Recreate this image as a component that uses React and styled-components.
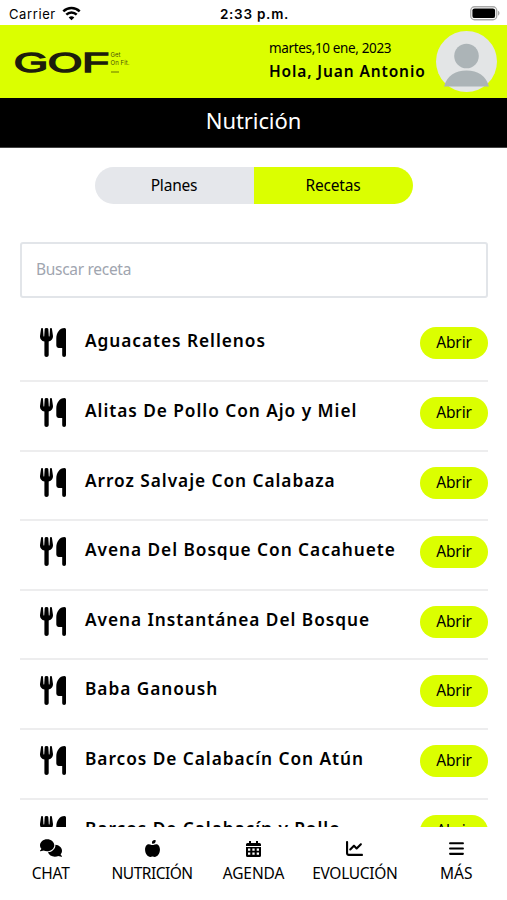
import React from 'react';
import styled, { createGlobalStyle } from 'styled-components';
import {
    FaComments,
    FaAppleWhole,
    FaChartLine,
    FaBars,
} from 'react-icons/fa6';

const GlobalStyles = createGlobalStyle`
    * {
        box-sizing: border-box;
    }

    body {
        margin: 0;
        background: white;
        color: black;
        font-family: 'Noto Sans', 'Open Sans', sans-serif;
    }
`

const Screen = styled.div`
    display: flex;
    flex-direction: column;
    width: 507px;
    height: 900px;
    overflow: hidden;
`

const StatusBar = styled.div`
    flex: none;
    display: grid;
    grid-template-columns: 1fr auto 1fr;
    align-items: center;
    height: 25px;
    padding: 2px 7px 0 9px;
    font-family: 'Inter', sans-serif;
    font-size: 13px;
    line-height: 20px;
`

const Carrier = styled.div`
    display: flex;
    align-items: center;
    gap: 6px;
    letter-spacing: 0.6px;
`

const Clock = styled.div`
    font-size: 13.5px;
    font-weight: 600;
    letter-spacing: 0.75px;
`

const BatterySlot = styled.div`
    display: flex;
    justify-content: flex-end;
`

const Header = styled.header`
    flex: none;
    display: flex;
    align-items: center;
    height: 73px;
    padding: 0 10px 0 14px;
    background: #dbff00;
`

const Greeting = styled.div`
    flex: none;
    width: 167px;
    margin: -4px 0 0 auto;
    white-space: nowrap;
`

const Today = styled.div`
    font-size: 13.5px;
    line-height: 20px;
    letter-spacing: -0.35px;
`

const Hello = styled.div`
    margin-top: 2px;
    font-size: 15.5px;
    font-weight: 600;
    line-height: 22px;
    letter-spacing: 0.88px;
`

const Title = styled.h1`
    flex: none;
    height: 50px;
    margin: 0;
    background: black;
    border-bottom: 1px solid #444;
    color: white;
    font-size: 22px;
    font-weight: 400;
    line-height: 45px;
    letter-spacing: -0.1px;
    text-align: center;
`

const Tabs = styled.div`
    flex: none;
    display: flex;
    width: 318px;
    height: 37px;
    margin: 19px auto 0;
    border-radius: 19px;
    overflow: hidden;
`

const Tab = styled.button`
    flex: 1;
    padding: 0 0 1px;
    border: 0;
    background: ${(props) => (props.$active ? '#dbff00' : '#e5e7eb')};
    color: black;
    font-family: inherit;
    font-size: 15.5px;
    letter-spacing: -0.2px;
`

const Search = styled.input`
    flex: none;
    height: 56px;
    margin: 38px 19px 0 20px;
    padding: 0 14px 2px;
    border: 2px solid #e2e5e9;
    border-radius: 3px;
    font-family: inherit;
    font-size: 15.5px;
    letter-spacing: -0.3px;
    outline: none;

    &::placeholder {
        color: #a0a5af;
        opacity: 1;
    }
`

const List = styled.div`
    flex: 1;
    min-height: 0;
    margin: 14.4px 19px 0 20px;
    overflow: hidden;
`

const Row = styled.div`
    display: flex;
    align-items: flex-start;
    height: 69.6px;
    padding: 15px 0 0 20px;
    border-bottom: 2px solid #ededee;
`

const Name = styled.div`
    flex: 1;
    margin-left: 18px;
    font-size: 17.3px;
    font-weight: 600;
    line-height: 27px;
    letter-spacing: 0.95px;
    white-space: nowrap;
`

const Open = styled.button`
    flex: none;
    width: 68px;
    height: 32px;
    padding: 0 0 2px;
    border: 0;
    border-radius: 16px;
    background: #dbff00;
    color: black;
    font-family: inherit;
    font-size: 15.5px;
    letter-spacing: -0.1px;
`

const Nav = styled.nav`
    flex: none;
    display: grid;
    grid-template-columns: repeat(5, 1fr);
    height: 73px;
    background: white;
`

const NavItem = styled.div`
    display: flex;
    flex-direction: column;
    align-items: center;
    padding-top: 12px;
    font-size: 15.5px;
    line-height: 22px;
    letter-spacing: ${(props) => props.$spacing}px;
    white-space: nowrap;
`

const NavIcon = styled.div`
    display: flex;
    height: 18px;
    margin-bottom: 5px;
    font-size: ${(props) => props.$size}px;
    align-items: center;
`

const Wifi = () => (
    <svg width="19" height="15" viewBox="0 0 19 15" fill="none" stroke="black" strokeWidth="2.5">
        <path d="M1.3 5.4C6 0.9 13 0.9 17.7 5.4" />
        <path d="M4.3 8.7C7.3 5.8 11.7 5.8 14.7 8.7" />
        <path d="M9.5 14.2L6.7 11.4C8.3 9.9 10.7 9.9 12.3 11.4Z" fill="black" stroke="none" />
    </svg>
)

const Battery = () => (
    <svg width="30" height="15" viewBox="0 0 30 15">
        <rect x="0.75" y="0.75" width="26" height="13" rx="3.8" fill="white" stroke="#a9a9a9" strokeWidth="1.3" />
        <rect x="2.4" y="2.4" width="22.7" height="9.7" rx="2.2" fill="black" />
        <path d="M28 4.8C30 5.6 30 8.8 28 9.6Z" fill="#a9a9a9" />
    </svg>
)

const Utensils = () => (
    <svg width="27" height="31" viewBox="0 0 27 31">
        <path d="M1.1 1.6Q1.3 0.9 2.2 1Q3 1.100 3 1.900L3.500 9.300Q3.900 9.900 4.200 9.300L4.700 1.900Q4.800 1 6.500 1Q8.200 1 8.300 1.900L8.800 9.300Q9.100 9.900 9.500 9.300L10 1.900Q10 1.100 10.800 1Q11.700 0.900 11.900 1.600L13 9Q13.200 13.200 8.700 14.600V28.300Q8.600 30 6.500 30T4.400 28.300V14.600Q-0.200 13.200 0 9Z" />
        <path d="M24.600 1Q26 1 26 2.500V28.200Q26 30 24.100 30T22.200 28.200V21H18.600Q16.300 20.800 16.300 18.500V11.500C16.300 6 19.500 1 24.600 1Z" />
    </svg>
)

const Calendar = () => (
    <svg width="15" height="17" viewBox="0 0 15 17">
        <path d="M3 1h2v2h5V1h2v2h1.5A1.5 1.5 0 0 1 15 4.500V6H0V4.500A1.500 1.500 0 0 1 1.500 3H3Z" />
        <path
            fillRule="evenodd"
            d="M0 7h15v8.500a1.500 1.500 0 0 1-1.500 1.500h-12A1.500 1.500 0 0 1 0 15.500ZM2 8.500v2.200h2.300V8.500ZM6.350 8.500v2.200h2.300V8.500ZM10.700 8.500v2.200h2.300V8.500ZM2 12.600v2.200h2.300v-2.200ZM6.350 12.600v2.200h2.300v-2.200ZM10.700 12.600v2.200h2.300v-2.200Z"
        />
    </svg>
)

const Logo = () => (
    <svg width="118" height="30" viewBox="0 0 118 30" fill="#1d1d0c">
        <text
            x="0"
            y="24.800"
            fontFamily="Liberation Sans"
            fontSize="27"
            stroke="#1d1d0c"
            strokeWidth="1.4"
            textLength="95"
            lengthAdjust="spacingAndGlyphs"
        >
            GOF
        </text>
        <g fontFamily="Inter" fontSize="6" fill="#4b5208">
            <text x="96.5" y="10">Get</text>
            <text x="96.5" y="18" textLength="19">On Fit.</text>
        </g>
        <rect x="97" y="24.5" width="8" height="1" fill="#6b7505" />
    </svg>
)

const Avatar = () => (
    <svg width="61" height="61" viewBox="0 0 61 61">
        <circle cx="30.5" cy="30.5" r="30.5" fill="#e3e5e6" />
        <circle cx="30.5" cy="25" r="12.3" fill="#acb4b7" />
        <path d="M8 55.5C11 45 19 39.5 30.5 39.5S50 45 53 55.5Z" fill="#acb4b7" />
    </svg>
)

const recipes = [
    'Aguacates Rellenos',
    'Alitas De Pollo Con Ajo y Miel',
    'Arroz Salvaje Con Calabaza',
    'Avena Del Bosque Con Cacahuete',
    'Avena Instantánea Del Bosque',
    'Baba Ganoush',
    'Barcos De Calabacín Con Atún',
    'Barcos De Calabacín y Pollo',
];

const sections = [
    { label: 'CHAT', icon: FaComments, size: 22, spacing: -0.2 },
    { label: 'NUTRICIÓN', icon: FaAppleWhole, size: 17, spacing: -0.5 },
    { label: 'AGENDA', icon: Calendar, size: 17, spacing: -0.1 },
    { label: 'EVOLUCIÓN', icon: FaChartLine, size: 17, spacing: -0.3 },
    { label: 'MÁS', icon: FaBars, size: 17, spacing: 0 },
];

const App = () => {
    return (
        <Screen>
            <GlobalStyles />
            <StatusBar>
                <Carrier>
                    Carrier
                    <Wifi />
                </Carrier>
                <Clock>2:33 p.m.</Clock>
                <BatterySlot>
                    <Battery />
                </BatterySlot>
            </StatusBar>

            <Header>
                <Logo />
                <Greeting>
                    <Today>martes,10 ene, 2023</Today>
                    <Hello>Hola, Juan Antonio</Hello>
                </Greeting>
                <Avatar />
            </Header>

            <Title>Nutrición</Title>

            <Tabs>
                <Tab>Planes</Tab>
                <Tab $active>Recetas</Tab>
            </Tabs>

            <Search placeholder="Buscar receta" />

            <List>
                {recipes.map((name) => (
                    <Row key={name}>
                        <Utensils />
                        <Name>{name}</Name>
                        <Open>Abrir</Open>
                    </Row>
                ))}
            </List>

            <Nav>
                {sections.map(({ label, icon: Icon, size, spacing }) => (
                    <NavItem key={label} $spacing={spacing}>
                        <NavIcon $size={size}>
                            <Icon />
                        </NavIcon>
                        {label}
                    </NavItem>
                ))}
            </Nav>
        </Screen>
    )
}

export default App;
